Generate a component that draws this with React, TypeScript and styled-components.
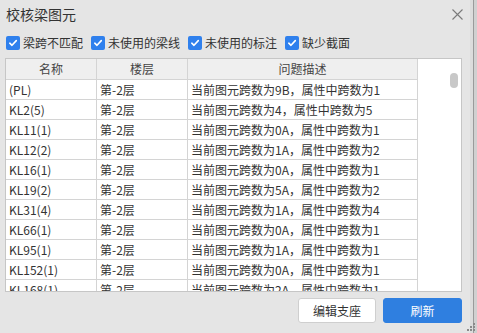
import React from "react";
import styled, { createGlobalStyle } from "styled-components";

const Global = createGlobalStyle`
  html, body { margin: 0; padding: 0; background: #e5e5e5; }
  body { font-family: "Noto Sans CJK SC", "Noto Sans", sans-serif; color: #333; }
`;

const Page = styled.div`
  width: 477px;
  height: 333px;
  display: flex;
  overflow: hidden;
  background: #e5e5e5;
`;

const Dialog = styled.div`
  flex: 1;
  display: flex;
  flex-direction: column;
  padding: 0 8px 0 5px;
  position: relative;
`;

const Edge = styled.div`
  width: 7px;
  background: linear-gradient(to right, #dcdcdc 0, #dcdcdc 3px, #9a9a9a 3px, #9a9a9a 4px, #d0d0d0 4px);
`;

const TitleBar = styled.div`
  height: 28px;
  display: flex;
  align-items: center;
  justify-content: space-between;
  padding-left: 1px;
`;

const Title = styled.div`
  font-size: 14px;
  line-height: 28px;
  color: #333;
`;

const Close = styled.button`
  border: none;
  background: transparent;
  padding: 0;
  margin-right: -2px;
  width: 14px;
  height: 14px;
  display: flex;
  align-items: center;
  justify-content: center;
`;

const Filters = styled.div`
  height: 30px;
  display: flex;
  align-items: center;
  gap: 8px;
  padding-left: 1px;
`;

const Check = styled.label`
  display: flex;
  align-items: center;
  gap: 3px;
  font-size: 12px;
  line-height: 16px;
  color: #333;
`;

const Box = styled.span`
  width: 14px;
  height: 14px;
  border-radius: 2px;
  background: #2f80ed;
  display: flex;
  align-items: center;
  justify-content: center;
`;

const TableFrame = styled.div`
  height: 234px;
  border: 1px solid #c6c6c6;
  background: #fff;
  display: flex;
  overflow: hidden;
  box-sizing: border-box;
`;

const Grid = styled.div`
  width: 412px;
  display: grid;
  grid-template-columns: 91px 91px 230px;
  grid-template-rows: 21px;
  grid-auto-rows: 20px;
  align-content: start;
`;

const HeadCell = styled.div`
  background: #efefef;
  border-right: 1px solid #d4d4d4;
  border-bottom: 1px solid #d4d4d4;
  font-size: 12px;
  line-height: 20px;
  text-align: center;
  color: #444;
  box-sizing: border-box;
`;

const Cell = styled.div`
  border-right: 1px solid #d4d4d4;
  border-bottom: 1px solid #d4d4d4;
  font-size: 12px;
  line-height: 19px;
  padding-left: 3px;
  white-space: nowrap;
  overflow: hidden;
  color: #333;
  box-sizing: border-box;
`;

const ScrollTrack = styled.div`
  flex: 1;
  position: relative;
  background: #fff;
`;

const Thumb = styled.div`
  position: absolute;
  left: 32px;
  top: 14px;
  width: 8px;
  height: 15px;
  border-radius: 4px;
  background: #c8c8c8;
`;

const Footer = styled.div`
  display: flex;
  justify-content: flex-end;
  gap: 7px;
  padding-top: 6px;
`;

const Button = styled.button<{ $primary?: boolean }>`
  width: ${(p) => (p.$primary ? "79px" : "78px")};
  height: 25px;
  border-radius: 3px;
  border: 1px solid ${(p) => (p.$primary ? "#2f7fe0" : "#cfcfcf")};
  background: ${(p) => (p.$primary ? "#2f7fe0" : "#fff")};
  color: ${(p) => (p.$primary ? "#fff" : "#333")};
  font-family: "Noto Sans CJK SC", sans-serif;
  font-size: 12px;
  line-height: 16px;
  padding: 0;
`;

const Grip = styled.svg`
  position: absolute;
  right: -6px;
  bottom: 1px;
`;

const rows: [string, string, string, string][] = [
  ["(PL)", "第-2层", "9B", "1"],
  ["KL2(5)", "第-2层", "4", "5"],
  ["KL11(1)", "第-2层", "0A", "1"],
  ["KL12(2)", "第-2层", "1A", "2"],
  ["KL16(1)", "第-2层", "0A", "1"],
  ["KL19(2)", "第-2层", "5A", "2"],
  ["KL31(4)", "第-2层", "1A", "4"],
  ["KL66(1)", "第-2层", "0A", "1"],
  ["KL95(1)", "第-2层", "1A", "1"],
  ["KL152(1)", "第-2层", "0A", "1"],
  ["KL168(1)", "第-2层", "2A", "1"],
];

const CheckIcon = () => (
  <svg width="10" height="10" viewBox="0 0 10 10">
    <path d="M1.8 5.2 L4 7.3 L8.3 2.6" fill="none" stroke="#fff" strokeWidth="1.6" strokeLinecap="round" strokeLinejoin="round" />
  </svg>
);

const filters = ["梁跨不匹配", "未使用的梁线", "未使用的标注", "缺少截面"];

export default function App() {
  return (
    <Page>
      <Global />
      <Dialog>
        <TitleBar>
          <Title>校核梁图元</Title>
          <Close aria-label="close">
            <svg width="11" height="11" viewBox="0 0 11 11">
              <path d="M0.5 0.5 L10.5 10.5 M10.5 0.5 L0.5 10.5" stroke="#7a7a7a" strokeWidth="1.1" />
            </svg>
          </Close>
        </TitleBar>
        <Filters>
          {filters.map((f) => (
            <Check key={f}>
              <Box>
                <CheckIcon />
              </Box>
              {f}
            </Check>
          ))}
        </Filters>
        <TableFrame>
          <Grid>
            <HeadCell>名称</HeadCell>
            <HeadCell>楼层</HeadCell>
            <HeadCell>问题描述</HeadCell>
            {rows.map((r) => (
              <React.Fragment key={r[0]}>
                <Cell>{r[0]}</Cell>
                <Cell>{r[1]}</Cell>
                <Cell>{`当前图元跨数为${r[2]}，属性中跨数为${r[3]}`}</Cell>
              </React.Fragment>
            ))}
          </Grid>
          <ScrollTrack>
            <Thumb />
          </ScrollTrack>
        </TableFrame>
        <Footer>
          <Button>编辑支座</Button>
          <Button $primary>刷新</Button>
        </Footer>
        <Grip width="10" height="10" viewBox="0 0 10 10">
          {[
            [7, 1],
            [4, 4],
            [7, 4],
            [1, 7],
            [4, 7],
            [7, 7],
          ].map(([x, y]) => (
            <rect key={`${x}-${y}`} x={x} y={y} width="2" height="2" fill="#8a8a8a" />
          ))}
        </Grip>
      </Dialog>
      <Edge />
    </Page>
  );
}
